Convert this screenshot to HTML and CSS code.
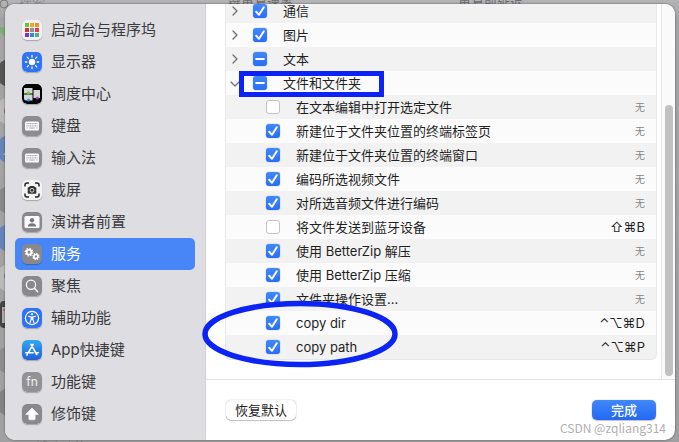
FILE: index.html
```html
<!DOCTYPE html>
<html lang="zh-CN">
<head>
<meta charset="utf-8">
<title>键盘快捷键</title>
<link rel="stylesheet" href="styles.css">
</head>
<body>
<div class="backdrop" aria-hidden="true">
  <span class="ghost ghost-search">搜索</span>
  <span class="ghost ghost-rate">键重复速率</span>
  <span class="ghost ghost-delay">重复前延迟</span>
  <span class="ghost ghost-bottom">辅助功能</span>
  <svg class="blobs" width="12" height="442" viewBox="0 0 12 442">
    <circle cx="4" cy="4" r="4" fill="none" stroke="#777" stroke-width="1"/>
    <rect y="18" width="12" height="1" fill="#a2a2a4"/>
    <path d="M0 27h6v9Q2 36 0 32z" fill="#7eac78"/>
    <circle cx="10" cy="73" r="14" fill="#555"/>
    <circle cx="10" cy="111" r="14" fill="#b9b9ba"/><circle cx="9" cy="111" r="5" fill="#b85c6b"/>
    <circle cx="10" cy="149" r="14" fill="#6684b8"/><path d="M3 155l3-4v4z" fill="#bbb"/>
    <circle cx="10" cy="200" r="14" fill="#88888a"/>
    <circle cx="10" cy="238" r="14" fill="#6684b8"/>
    <circle cx="10" cy="278" r="14" fill="#bababb"/><circle cx="8" cy="276" r="4" fill="#5995b5"/>
    <rect y="301" width="12" height="27" rx="4" fill="#444"/><rect x="2" y="307" width="8" height="16" fill="#aaa"/><path d="M3 309h3v2H3z" fill="#bd7840"/>
    <circle cx="10" cy="360" r="14" fill="#8d8d8f"/>
    <circle cx="10" cy="402" r="14" fill="#838385"/>
  </svg>
</div>

<main class="dialog">
  <nav class="sidebar">
    <a class="item" href="#launchpad"><svg class="icon" viewBox="0 0 20 20"><rect width="20" height="20" rx="5" fill="#f1f1f2"/><path fill="#62c93d" d="M3 3h4v4H3z"/><path fill="#f4a32c" d="M8 3h4v4H8z"/><path fill="#ef9224" d="M13 3h4v4h-4z"/><path fill="#d5332c" d="M3 8h4v4H3z"/><path fill="#8e9496" d="M8 8h4v4H8z"/><path fill="#ed3a55" d="M13 8h4v4h-4z"/><path fill="#7d37b8" d="M3 13h4v4H3z"/><path fill="#2f87e2" d="M8 13h4v4H8z"/><path fill="#4db18b" d="M13 13h4v4h-4z"/></svg>启动台与程序坞</a>
    <a class="item" href="#display"><svg class="icon" viewBox="0 0 20 20"><rect width="20" height="20" rx="5" fill="#2f74f6"/><circle cx="10" cy="10" r="3.2" fill="#fff"/><path d="M10 3.4v1.5M10 15.1v1.5M3.4 10h1.5M15.1 10h1.5M5.3 5.3l1.1 1.1M13.6 13.6l1.1 1.1M5.3 14.7l1.1-1.1M13.6 6.4l1.1-1.1" stroke="#fff" stroke-width="1.3" stroke-linecap="round"/></svg>显示器</a>
    <a class="item" href="#mission"><svg class="icon" viewBox="0 0 20 20"><rect width="20" height="20" rx="5" fill="#050505"/><path fill="#d5d5d7" d="M2 4h8.5v5.5H2zM2 10.5h8.500v6H4q-2 0-2-2zM11.500 6H18v8h-6.500z"/><circle cx="6.500" cy="8.800" r="1.600" fill="#5ce22a"/><circle cx="15.300" cy="14" r="1.500" fill="#a43be0"/><circle cx="6.500" cy="16" r="1.600" fill="#259bf1"/></svg>调度中心</a>
    <a class="item" href="#keyboard"><svg class="icon" viewBox="0 0 20 20"><rect width="20" height="20" rx="5" fill="#8b8b90"/><rect x="3" y="5.500" width="14" height="9" rx="1.500" fill="#fff"/><path d="M4.500 7.700h11M4.500 9.800h11" stroke="#aaaaad" stroke-width="1.300" stroke-dasharray="1.200 .5"/><path d="M4.500 12h1.500M7 12h6M14 12h1.500" stroke="#aaaaad" stroke-width="1.200"/></svg>键盘</a>
    <a class="item" href="#input"><svg class="icon" viewBox="0 0 20 20"><rect width="20" height="20" rx="5" fill="#8b8b90"/><rect x="3" y="5.500" width="14" height="9" rx="1.500" fill="#fff"/><path d="M4.500 7.700h11M4.500 9.800h11" stroke="#aaaaad" stroke-width="1.300" stroke-dasharray="1.200 .5"/><path d="M4.500 12h1.500M7 12h6M14 12h1.500" stroke="#aaaaad" stroke-width="1.200"/></svg>输入法</a>
    <a class="item" href="#screenshot"><svg class="icon" viewBox="0 0 20 20"><rect width="20" height="20" rx="5" fill="#f3f3f4"/><path d="M3 6.500V5q0-2 2-2h2M13 3h2q2 0 2 2v1.500M17 13.500V15q0 2-2 2h-2M7 17H5q-2 0-2-2v-1.500" fill="none" stroke="#222" stroke-width="1.500"/><path d="M7 7.300l1-1.300h4l1 1.300h.5q.8 0 .8.800v4.800q0 .8-.8.800h-7q-.8 0-.8-.8V8.100q0-.8.800-.8z" fill="#333"/><circle cx="10" cy="10.300" r="1.900" fill="none" stroke="#ddd"/></svg>截屏</a>
    <a class="item" href="#presenter"><svg class="icon" viewBox="0 0 20 20"><rect width="20" height="20" rx="5" fill="#88888d"/><rect x="2.500" y="4" width="15" height="12" rx="1.500" fill="#fff"/><circle cx="10" cy="8.300" r="2.200" fill="#77777c"/><path d="M5.800 14.500q.3-3.300 4.200-3.300t4.200 3.300z" fill="#77777c"/></svg>演讲者前置</a>
    <a class="item selected" href="#services" aria-current="page"><svg class="icon" viewBox="0 0 20 20"><rect width="20" height="20" rx="5" fill="#88888d"/><g fill="none" stroke="#fff"><circle cx="7" cy="8.200" r="2.400" stroke-width="1.900"/><circle cx="7" cy="8.200" r="3.700" stroke-width="1.300" stroke-dasharray="1.450 1.450"/><circle cx="13.900" cy="12.500" r="2" stroke-width="1.700"/><circle cx="13.900" cy="12.500" r="3.100" stroke-width="1.200" stroke-dasharray="1.220 1.220"/></g></svg>服务</a>
    <a class="item" href="#spotlight"><svg class="icon" viewBox="0 0 20 20"><rect width="20" height="20" rx="5" fill="#88888d"/><circle cx="9" cy="8.800" r="4.600" fill="none" stroke="#fff" stroke-width="1.200"/><path d="M12.400 12.300l3.300 3.400" stroke="#fff" stroke-width="1.400" stroke-linecap="round"/></svg>聚焦</a>
    <a class="item" href="#accessibility"><svg class="icon" viewBox="0 0 20 20"><rect width="20" height="20" rx="5" fill="#2f74f6"/><circle cx="10" cy="10" r="6.600" fill="none" stroke="#fff" stroke-width="1.200"/><circle cx="10" cy="6.200" r="1.100" fill="#fff"/><path d="M6.500 8.300l2.600.6v2.600L8 15M13.500 8.300l-2.600.6v2.600L12 15" fill="none" stroke="#fff" stroke-width="1.100" stroke-linecap="round" stroke-linejoin="round"/><path d="M9 8.800h2v3H9z" fill="#fff"/></svg>辅助功能</a>
    <a class="item" href="#app"><svg class="icon" viewBox="0 0 20 20"><defs><linearGradient id="store" x2="0" y2="1"><stop stop-color="#35a8ee"/><stop offset="1" stop-color="#235fd8"/></linearGradient></defs><rect width="20" height="20" rx="5" fill="url(#store)"/><path d="M9 4.300l5.700 10.200M11.100 4.300L6.200 12.800M3.800 12.800h7.400M14 12.800h2.300M5.300 14.400l-.4.700" fill="none" stroke="#fff" stroke-width="1.600" stroke-linecap="round"/></svg>App快捷键</a>
    <a class="item" href="#fn"><svg class="icon" viewBox="0 0 20 20"><rect width="20" height="20" rx="5" fill="#929296"/><text x="10" y="14" text-anchor="middle" class="fn">fn</text></svg>功能键</a>
    <a class="item" href="#modifier"><svg class="icon" viewBox="0 0 20 20"><rect width="20" height="20" rx="5" fill="#88888d"/><path d="M10 4l6.500 6.500h-3.300V15q0 .8-.8.800H7.600q-.8 0-.8-.8v-4.500H3.500z" fill="#fff" stroke="#fff" stroke-width=".5" stroke-linejoin="round"/></svg>修饰键</a>
  </nav>

  <section class="panel">
    <div class="viewport">
      <div class="scroller">
        <table class="services">
          <tbody>
            <tr class="group"><td><button class="twist" aria-label="展开通信"><svg viewBox="0 0 10 10"><path d="M3 1l4 4-4 4"/></svg></button><input type="checkbox" id="s1" checked><label for="s1">通信</label></td><td class="key"></td></tr>
            <tr class="group"><td><button class="twist" aria-label="展开图片"><svg viewBox="0 0 10 10"><path d="M3 1l4 4-4 4"/></svg></button><input type="checkbox" id="s2" checked><label for="s2">图片</label></td><td class="key"></td></tr>
            <tr class="group"><td><button class="twist" aria-label="展开文本"><svg viewBox="0 0 10 10"><path d="M3 1l4 4-4 4"/></svg></button><input class="mixed" type="checkbox" id="s3"><label for="s3">文本</label></td><td class="key"></td></tr>
            <tr class="group"><td><button class="twist" aria-label="收起文件和文件夹" aria-expanded="true"><svg viewBox="0 0 10 10"><path d="M1 4l4 4 4-4"/></svg></button><input class="mixed" type="checkbox" id="s4"><label for="s4">文件和文件夹</label><span class="frame"></span></td><td class="key"></td></tr>
            <tr><td><input type="checkbox" id="s5"><label for="s5">在文本编辑中打开选定文件</label></td><td class="key none">无</td></tr>
            <tr><td><input type="checkbox" id="s6" checked><label for="s6">新建位于文件夹位置的终端标签页</label></td><td class="key none">无</td></tr>
            <tr><td><input type="checkbox" id="s7" checked><label for="s7">新建位于文件夹位置的终端窗口</label></td><td class="key none">无</td></tr>
            <tr><td><input type="checkbox" id="s8" checked><label for="s8">编码所选视频文件</label></td><td class="key none">无</td></tr>
            <tr><td><input type="checkbox" id="s9" checked><label for="s9">对所选音频文件进行编码</label></td><td class="key none">无</td></tr>
            <tr><td><input type="checkbox" id="s10"><label for="s10">将文件发送到蓝牙设备</label></td><td class="key">⇧⌘B</td></tr>
            <tr><td><input type="checkbox" id="s11" checked><label for="s11">使用 BetterZip 解压</label></td><td class="key none">无</td></tr>
            <tr><td><input type="checkbox" id="s12" checked><label for="s12">使用 BetterZip 压缩</label></td><td class="key none">无</td></tr>
            <tr><td><input type="checkbox" id="s13" checked><label for="s13">文件夹操作设置...</label></td><td class="key none">无</td></tr>
            <tr><td><input type="checkbox" id="s14" checked><label for="s14">copy dir</label></td><td class="key">⌃⌥⌘D</td></tr>
            <tr><td><input type="checkbox" id="s15" checked><label for="s15">copy path</label></td><td class="key">⌃⌥⌘P</td></tr>
          </tbody>
        </table>
      </div>
      <div class="track"><div class="thumb"></div></div>
    </div>
    <footer class="actions">
      <button class="btn">恢复默认</button>
      <button class="btn primary">完成</button>
    </footer>
    <svg class="ring" viewBox="0 0 196 68" aria-hidden="true"><ellipse cx="98" cy="34" rx="95" ry="30.500" fill="none" stroke="#0b24f5" stroke-width="5.500"/></svg>
    <span class="watermark">CSDN @zqliang314</span>
  </section>
</main>
</body>
</html>
```
FILE: styles.css
```css
* { box-sizing: border-box; }

body {
  margin: 0;
  height: 100vh;
  padding: 4px 4px 2px 5px;
  overflow: hidden;
  background: #a5a5a7;
  color: #1f1f1f;
  font: 13px/24px Inter, "Noto Sans CJK SC", sans-serif;
}

.backdrop {
  position: absolute;
  inset: 0;
  overflow: hidden;
  background: linear-gradient(#b4b4b6, #a4a4a6 20px, #a0a0a2);
}
.blobs { position: absolute; left: 0; top: 0; }
.ghost { position: absolute; color: #6c6c6e; line-height: 14px; white-space: nowrap; }
.ghost-search { left: 19px; top: -5px; color: #8e8e90; }
.ghost-rate { left: 228px; top: -5px; }
.ghost-delay { left: 458px; top: -5px; }
.ghost-bottom { left: 35px; bottom: -12px; }

.dialog {
  position: relative;
  display: flex;
  height: 100%;
  border-radius: 10px;
  background: #fff;
  box-shadow: 0 0 2px rgba(0, 0, 0, .6);
}

.sidebar {
  flex: none;
  width: 201px;
  padding: 10px;
  border-right: 1px solid #d2d1d6;
  border-radius: 10px 0 0 10px;
  background: #dedde2;
}
.item {
  display: flex;
  align-items: center;
  gap: 9px;
  height: 32px;
  padding: 0 7px;
  border-radius: 5px;
  color: #3a3a3c;
  font-size: 15px;
  text-decoration: none;
}
.item.selected { background: #4886f7; color: #fff; }
.icon {
  flex: none;
  width: 20px;
  height: 20px;
  border-radius: 5px;
  box-shadow: 0 1px 1px rgba(0, 0, 0, .25);
}
.fn { fill: #f2f2f3; font: 12px Inter, sans-serif; }

.panel {
  position: relative;
  flex: 1;
  display: flex;
  flex-direction: column;
  min-width: 0;
}
.viewport {
  flex: 1;
  display: flex;
  min-height: 0;
  overflow: hidden;
  border-bottom: 1px solid #e2e2e2;
  border-top-right-radius: 10px;
}
.scroller {
  flex: 1;
  display: flex;
  flex-direction: column;
  justify-content: flex-end;
  padding: 0 5px 20px 20px;
}
.services {
  width: 100%;
  border-spacing: 0;
  border-radius: 5px;
  box-shadow: 0 0 0 1px #e8e8e8;
  background: #f2f2f2;
}
.services tr { height: 24px; }
.services tr:nth-child(even) { background: #fbfbfb; }
.services td { padding: 0; white-space: nowrap; }
.services td:first-child {
  position: relative;
  display: flex;
  align-items: center;
  gap: 16px;
  height: 24px;
  padding-left: 40px;
}
.services .group td:first-child { padding-left: 4px; }
.services td.key { padding-right: 11px; text-align: right; }
.services td.none { color: #858585; font-size: 10px; }

.twist {
  width: 10px;
  height: 10px;
  margin-right: -3px;
  padding: 0;
  border: 0;
  background: none;
}
.twist svg { display: block; width: 10px; height: 10px; }
.twist path {
  fill: none;
  stroke: #6e6e6e;
  stroke-width: 1.3;
  stroke-linecap: round;
  stroke-linejoin: round;
}

input[type="checkbox"] {
  appearance: none;
  flex: none;
  width: 14px;
  height: 14px;
  margin: 0;
  border: 1px solid #c4c4c4;
  border-radius: 3px;
  background: #fff;
}
input[type="checkbox"]:checked,
input.mixed[type="checkbox"] {
  border: 0;
  background: url('data:image/svg+xml,<svg xmlns="http://www.w3.org/2000/svg" viewBox="0 0 14 14"><path d="M3.200 7.800l2.800 3L10.800 3.300" fill="none" stroke="white" stroke-width="2" stroke-linecap="round" stroke-linejoin="round"/></svg>'), linear-gradient(#4189fb, #2a6df5);
  box-shadow: 0 0 1px #2a6df5;
}
input.mixed[type="checkbox"] {
  background: url('data:image/svg+xml,<svg xmlns="http://www.w3.org/2000/svg" viewBox="0 0 14 14"><path d="M3.200 7h7.600" stroke="white" stroke-width="2" stroke-linecap="round"/></svg>'), linear-gradient(#4189fb, #2a6df5);
}

.track {
  flex: none;
  display: flex;
  justify-content: center;
  width: 14px;
  padding: 101px 0 3px;
  border-left: 1px solid #e6e6e6;
  background: #fafafa;
}
.thumb { width: 8px; border-radius: 4px; background: #c1c1c1; }

.actions {
  flex: none;
  display: flex;
  justify-content: space-between;
  padding: 20px 19px 20px 20px;
}
.btn {
  height: 20px;
  padding: 0 9px;
  border: 0;
  border-radius: 5px;
  background: #fff;
  box-shadow: 0 0 1px rgba(0, 0, 0, .5), 0 1px 1px rgba(0, 0, 0, .2);
  color: #1f1f1f;
  font: 13px/20px Inter, "Noto Sans CJK SC", sans-serif;
}
.btn.primary {
  padding: 0 19px;
  background: linear-gradient(#4088fb, #2468f4);
  color: #fff;
  font-weight: 500;
}

/* Callouts drawn over the list */
.frame {
  position: absolute;
  left: 13px;
  top: 0;
  width: 145px;
  height: 26px;
  border: 5px solid #0b24f5;
  z-index: 1;
}
.ring {
  position: absolute;
  left: -4px;
  bottom: 72px;
  width: 196px;
  height: 68px;
}
.watermark {
  position: absolute;
  right: 9px;
  bottom: 3px;
  color: #b0b0b0;
  font: 12px/18px "Noto Sans CJK SC", sans-serif;
}
```
